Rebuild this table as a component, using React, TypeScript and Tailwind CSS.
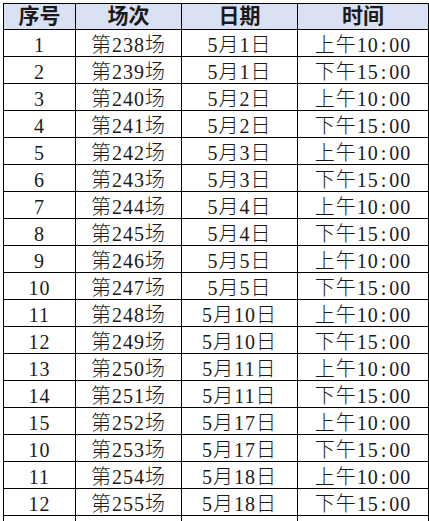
const rows: [string, string, string, string][] = [
  ['1', '第238场', '5月1日', '上午10:00'],
  ['2', '第239场', '5月1日', '下午15:00'],
  ['3', '第240场', '5月2日', '上午10:00'],
  ['4', '第241场', '5月2日', '下午15:00'],
  ['5', '第242场', '5月3日', '上午10:00'],
  ['6', '第243场', '5月3日', '下午15:00'],
  ['7', '第244场', '5月4日', '上午10:00'],
  ['8', '第245场', '5月4日', '下午15:00'],
  ['9', '第246场', '5月5日', '上午10:00'],
  ['10', '第247场', '5月5日', '下午15:00'],
  ['11', '第248场', '5月10日', '上午10:00'],
  ['12', '第249场', '5月10日', '下午15:00'],
  ['13', '第250场', '5月11日', '上午10:00'],
  ['14', '第251场', '5月11日', '下午15:00'],
  ['15', '第252场', '5月17日', '上午10:00'],
  ['10', '第253场', '5月17日', '下午15:00'],
  ['11', '第254场', '5月18日', '上午10:00'],
  ['12', '第255场', '5月18日', '下午15:00'],
];

const cols = 'grid grid-cols-[72px_106px_116px_131px]';
const cell = 'border-r border-b border-black flex items-center justify-center';

// the time column gets a wide colon, like a half-width Song font
function Time({ value }: { value: string }) {
  const [a, b] = value.split(':');
  return (
    <span>
      {a}
      <span className="px-[2px]">:</span>
      {b}
    </span>
  );
}

export default function App() {
  return (
    <div className="w-[429px] h-[521px] overflow-hidden bg-white pl-[3px] pt-[3px] font-['Liberation_Serif','Noto_Sans_CJK_SC',serif] text-[#1a1a1a]">
      <div className="border-l border-t border-black w-[426px]">
        {/* header */}
        <div className={`${cols} h-[26px] bg-[#d9e1f2] text-[21px] font-bold leading-none`}>
          <div className={cell}>序号</div>
          <div className={cell}>场次</div>
          <div className={cell}>日期</div>
          <div className={cell}>时间</div>
        </div>
        {rows.map((r, i) => (
          <div key={i} className={`${cols} h-[27px] text-[20px] leading-none font-light tracking-[1px]`}>
            <div className={`${cell} pt-[4px]`}>{r[0]}</div>
            <div className={`${cell} pt-[4px]`}>{r[1]}</div>
            <div className={`${cell} pt-[4px]`}>{r[2]}</div>
            <div className={`${cell} pt-[4px]`}>
              <Time value={r[3]} />
            </div>
          </div>
        ))}
        <div className={`${cols} h-[27px]`}>
          <div className={cell}></div>
          <div className={cell}></div>
          <div className={cell}></div>
          <div className={cell}></div>
        </div>
      </div>
    </div>
  );
}
